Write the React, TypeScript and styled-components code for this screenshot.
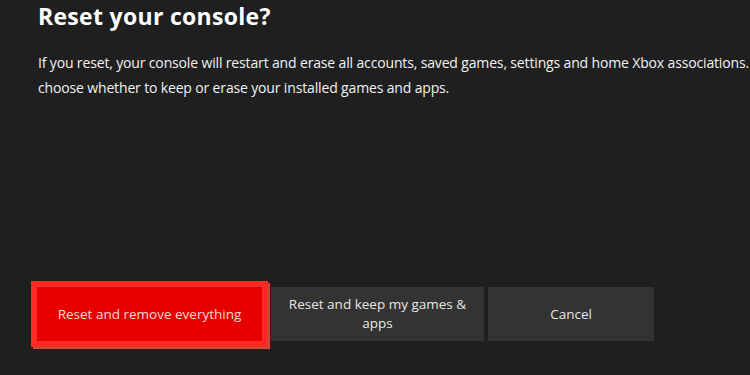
import React from 'react';
import styled, { createGlobalStyle } from 'styled-components';

const GlobalStyle = createGlobalStyle`
  html, body {
    margin: 0;
    padding: 0;
    background: #1f1f1f;
    overflow: hidden;
  }

  body {
    font-family: 'Open Sans', 'Noto Sans', sans-serif;
  }
`;

const Screen = styled.div`
  width: 750px;
  height: 375px;
  box-sizing: border-box;
  background: #1f1f1f;
  display: flex;
  flex-direction: column;
  padding: 0 0 0 38px;
  overflow: hidden;
`;

const Title = styled.h1`
  margin: 0;
  color: #ffffff;
  font-size: 23px;
  font-weight: 700;
  line-height: 32px;
  letter-spacing: 0.3px;
`;

const Body = styled.p`
  margin: 18px 0 0;
  color: #f2f2f2;
  font-size: 14px;
  line-height: 25px;
  white-space: nowrap;
  letter-spacing: -0.15px;
`;

const Actions = styled.div`
  margin-top: auto;
  margin-bottom: 34px;
  margin-left: -1px;
  display: flex;
  align-items: stretch;
  gap: 4px;
`;

const ActionButton = styled.button<{ $width: number; $focused?: boolean }>`
  width: ${({ $width }) => $width}px;
  height: 54px;
  box-sizing: border-box;
  border: none;
  padding: 0 14px;
  font-family: inherit;
  font-size: 13.5px;
  line-height: 19px;
  text-align: center;
  color: ${({ $focused }) => ($focused ? '#ffd6d6' : '#e6e6e6')};
  background: ${({ $focused }) => ($focused ? '#e60000' : '#333333')};
  outline: ${({ $focused }) => ($focused ? '6px solid #ff2a24' : 'none')};
  margin-right: ${({ $focused }) => ($focused ? '5px' : '0')};
  box-shadow: ${({ $focused }) =>
    $focused ? '0 0 0 6px #ff2a24, 2px 2px 0 6px #b2553a, 3px 3px 0 6px #5a0a1c' : 'none'};
`;

export default function App() {
  return (
    <>
      <GlobalStyle />
      <Screen>
        <Title>Reset your console?</Title>
        <Body>
          If you reset, your console will restart and erase all accounts, saved games, settings and home Xbox associations. You can
          <br />
          choose whether to keep or erase your installed games and apps.
        </Body>
        <Actions>
          <ActionButton $width={225} $focused>
            Reset and remove everything
          </ActionButton>
          <ActionButton $width={213}>Reset and keep my games &amp; apps</ActionButton>
          <ActionButton $width={166}>Cancel</ActionButton>
        </Actions>
      </Screen>
    </>
  );
}
